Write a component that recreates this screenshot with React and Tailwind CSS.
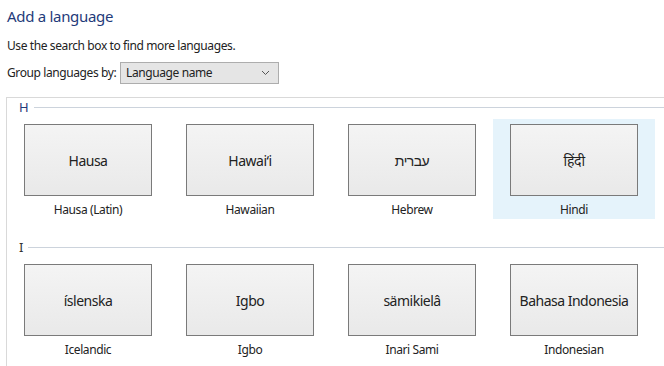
const GROUPS = [
  {
    letter: 'H',
    accent: true,
    items: [
      { native: 'Hausa', name: 'Hausa (Latin)' },
      { native: 'Hawai‘i', name: 'Hawaiian' },
      { native: 'עברית', name: 'Hebrew' },
      { native: 'हिंदी', name: 'Hindi', selected: true },
    ],
  },
  {
    letter: 'I',
    items: [
      { native: 'íslenska', name: 'Icelandic' },
      { native: 'Igbo', name: 'Igbo' },
      { native: 'sämikielâ', name: 'Inari Sami' },
      { native: 'Bahasa Indonesia', name: 'Indonesian' },
    ],
  },
];

const LanguageTile = ({ native, name, selected }) => (
  <div
    className={`flex h-[100px] w-[162px] shrink-0 flex-col items-center pt-[5px] ${
      selected ? 'bg-[#e5f3fb]' : ''
    }`}
  >
    <div className="flex h-[72px] w-[128px] items-center justify-center border border-[#7a7a7a] bg-gradient-to-b from-[#f4f4f4] to-[#e9e9e9] text-[14px] tracking-[-0.5px] text-[#222]">
      {native}
    </div>
    <div className="mt-[6px] text-[12px] leading-[16px] tracking-[-0.4px] text-[#222]">{name}</div>
  </div>
);

export default function App() {
  return (
    <div
      className="flex h-[366px] w-[664px] flex-col overflow-hidden bg-white"
      style={{ fontFamily: '"Noto Sans", "Liberation Sans", sans-serif' }}
    >
      <div className="pl-[7px]">
        <h1 className="mt-[5px] text-[15px] leading-[22px] tracking-[-0.3px] text-[#1f3b7a]">
          Add a language
        </h1>
        <p className="mt-[11px] text-[12px] leading-[16px] tracking-[-0.4px] text-[#222]">
          Use the search box to find more languages.
        </p>
        <div className="mt-[8px] flex items-center text-[12px] tracking-[-0.4px] text-[#222]">
          <span className="w-[113px]">Group languages by:</span>
          <div className="flex h-[22px] w-[159px] items-center justify-between border border-[#adadad] bg-[#e5e5e5] pl-[5px] pr-[8px]">
            <span>Language name</span>
            <svg width="9" height="6" viewBox="0 0 9 6" fill="none">
              <path d="M1 1l3.5 3.5L8 1" stroke="#555" strokeWidth="1" />
            </svg>
          </div>
        </div>
      </div>

      <div className="ml-[6px] mt-[13px] flex-1 border-l border-t border-[#d9d9d9]">
        {GROUPS.map((group, i) => (
          <div key={group.letter} className={i > 0 ? 'mt-[20px]' : 'mt-[1px]'}>
            <div className="flex h-[16px] items-center pl-[12px]">
              <span
                className={`text-[13px] leading-[16px] ${group.accent ? 'text-[#1f3b7a]' : 'text-[#333]'}`}
              >
                {group.letter}
              </span>
              <div className="ml-[5px] h-px flex-1 bg-[#ccd3dc]" />
            </div>
            <div className="mt-[4px] flex">
              {group.items.map((item) => (
                <LanguageTile key={item.name} {...item} />
              ))}
            </div>
          </div>
        ))}
      </div>
    </div>
  );
}
